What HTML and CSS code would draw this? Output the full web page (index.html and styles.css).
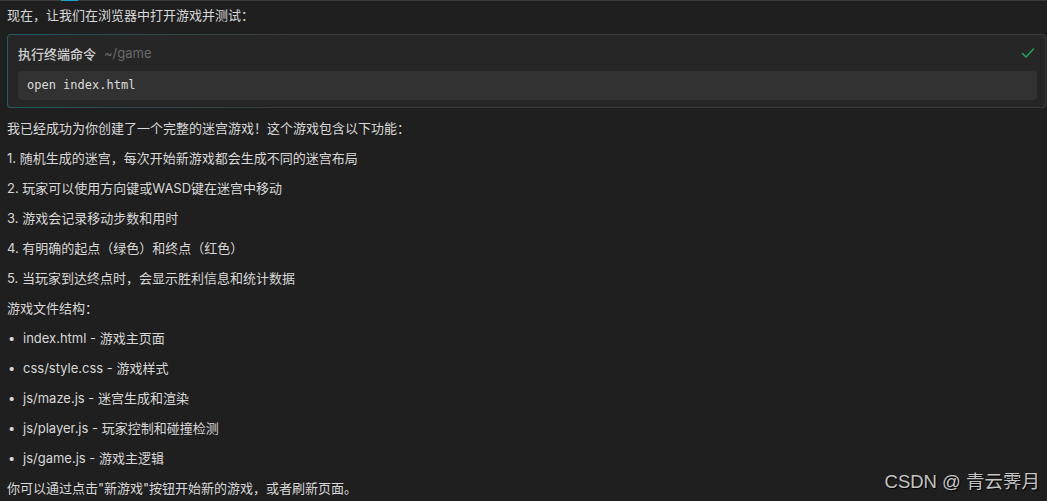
FILE: index.html
```html
<!DOCTYPE html>
<html lang="zh">
<head>
<meta charset="utf-8">
<title>迷宫游戏</title>
<link rel="stylesheet" href="styles.css">
</head>
<body>
<div class="topbar"><span class="tab-indicator"></span></div>
<main class="content">
  <p class="line first">现在，让我们在浏览器中打开游戏并测试：</p>
  <section class="card">
    <div class="card-head">
      <span class="card-title">执行终端命令</span>
      <span class="card-path">~/game</span>
      <svg class="check" width="14" height="12" viewBox="0 0 14 12"><path d="M1.5 6.5 L5 10 L12.5 2" fill="none" stroke="#1fa75a" stroke-width="1.5" stroke-linecap="round" stroke-linejoin="round"/></svg>
    </div>
    <div class="code">open index.html</div>
  </section>
  <p class="line after-card">我已经成功为你创建了一个完整的迷宫游戏！这个游戏包含以下功能：</p>
  <p class="line">1. 随机生成的迷宫，每次开始新游戏都会生成不同的迷宫布局</p>
  <p class="line">2. 玩家可以使用方向键或WASD键在迷宫中移动</p>
  <p class="line">3. 游戏会记录移动步数和用时</p>
  <p class="line">4. 有明确的起点（绿色）和终点（红色）</p>
  <p class="line">5. 当玩家到达终点时，会显示胜利信息和统计数据</p>
  <p class="line">游戏文件结构：</p>
  <ul class="files">
    <li class="line"><span class="dot">•</span>index.html - 游戏主页面</li>
    <li class="line"><span class="dot">•</span>css/style.css - 游戏样式</li>
    <li class="line"><span class="dot">•</span>js/maze.js - 迷宫生成和渲染</li>
    <li class="line"><span class="dot">•</span>js/player.js - 玩家控制和碰撞检测</li>
    <li class="line"><span class="dot">•</span>js/game.js - 游戏主逻辑</li>
  </ul>
  <p class="line">你可以通过点击"新游戏"按钮开始新的游戏，或者刷新页面。</p>
</main>
<div class="watermark">CSDN @ 青云霁月</div>
</body>
</html>
```

FILE: styles.css
```css
html, body {
  margin: 0;
  padding: 0;
  background: #1f1f1f;
  height: 501px;
  overflow: hidden;
}
body {
  font-family: "Inter", "Noto Sans CJK SC", sans-serif;
  font-size: 13px;
  color: #d8d8d8;
  position: relative;
}
.topbar {
  height: 1px;
  background: #3a3a3a;
  display: flex;
}
.tab-indicator {
  margin-left: 61px;
  width: 17px;
  height: 1px;
  background: #1c9fd0;
}
.content {
  padding: 0 1px 0 7px;
}
.line {
  margin: 10px 0 0 0;
  line-height: 20px;
  height: 20px;
  white-space: nowrap;
}
.line.first {
  margin-top: 4px;
}
.line.after-card {
  margin-top: 10px;
}
.card {
  margin-top: 9px;
  height: 72px;
  border: 1px solid transparent;
  border-radius: 4px;
  background:
    linear-gradient(#262626, #262626) padding-box,
    linear-gradient(to right, #1d5f67 0%, #2d4a4e 10%, #3b3b3b 30%, #3b3b3b 100%) border-box;
  padding: 0 8px 0 10px;
  box-sizing: content-box;
}
.card-head {
  height: 36px;
  display: flex;
  align-items: center;
  gap: 8px;
}
.card-title {
  color: #d0d0d0;
  font-weight: 500;
}
.card-path {
  color: #6b6b6b;
}
.check {
  margin-left: auto;
  margin-right: 2px;
}
.code {
  height: 29px;
  line-height: 29px;
  background: #323232;
  border-radius: 4px;
  padding: 0 9px;
  font-family: "DejaVu Sans Mono", "Liberation Mono", monospace;
  font-size: 12px;
  color: #dcdcdc;
}
.files {
  list-style: none;
  margin: 0;
  padding: 0;
}
.files .line {
  display: flex;
}
.dot {
  width: 15px;
  flex: none;
  padding-left: 1px;
}
.watermark {
  position: absolute;
  right: 7px;
  bottom: 8px;
  font-family: "Liberation Sans", "Noto Sans CJK SC", sans-serif;
  font-size: 18.5px;
  line-height: 22px;
  color: #c4c4c4;
  text-shadow: 1px 1px 1px #000;
}
```
